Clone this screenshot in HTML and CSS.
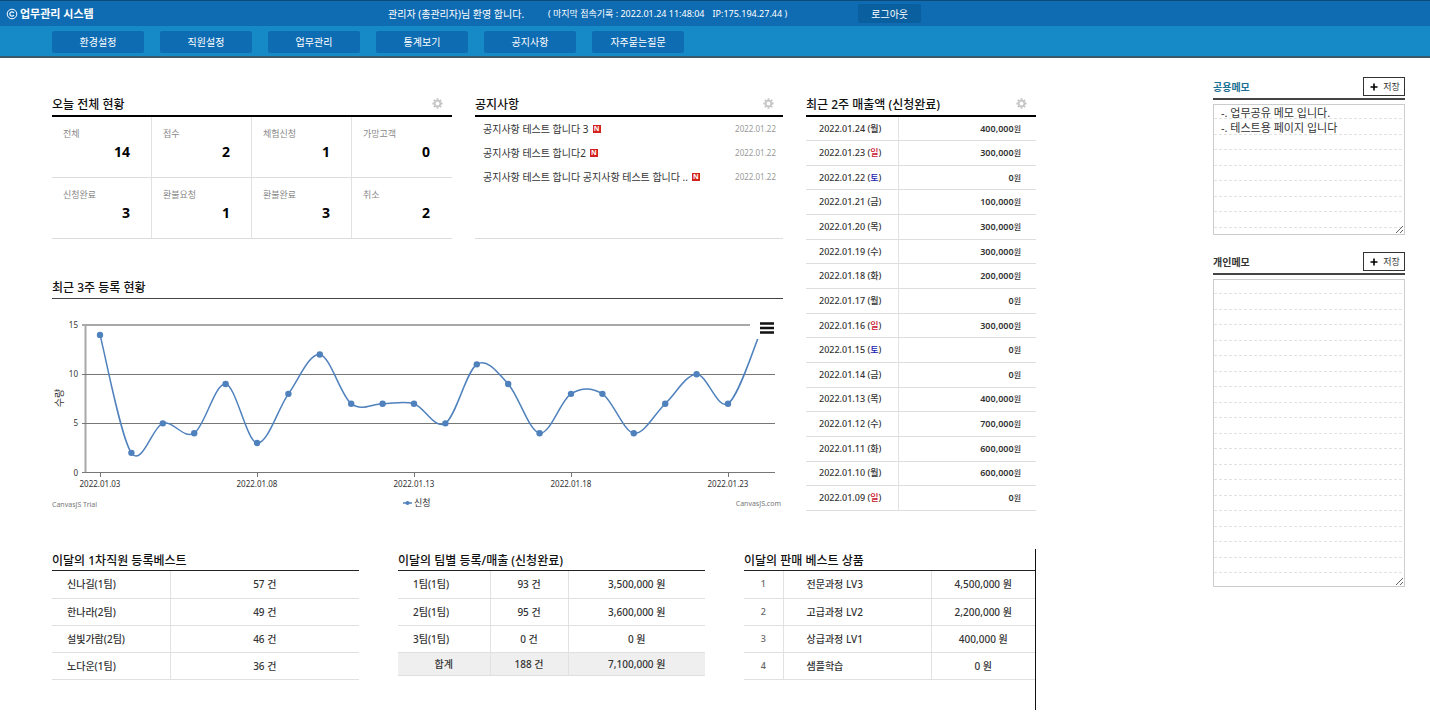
FILE: index.html
```html
<!DOCTYPE html>
<html lang="ko">
<head>
<meta charset="utf-8">
<title>업무관리 시스템</title>
<link rel="stylesheet" href="styles.css">
</head>
<body>
<svg class="defs" aria-hidden="true">
  <symbol id="gear" viewBox="0 0 12 12">
    <circle cx="6" cy="6" r="3.1" fill="none" stroke="currentColor" stroke-width="1.9"/>
    <path d="M6 .4v2M6 9.6v2M.4 6h2M9.6 6h2M2 2l1.5 1.5M8.500 8.500L10 10M10 2L8.500 3.500M3.500 8.500L2 10" stroke="currentColor" stroke-width="2"/>
  </symbol>
  <symbol id="plus" viewBox="0 0 8 8">
    <path d="M4 .5v7M.5 4h7" stroke="currentColor" stroke-width="1.6"/>
  </symbol>
</svg>

<header>
  <div class="topbar">
    <h1 class="brand">
      <svg class="brand-icon" viewBox="0 0 12 12" aria-hidden="true"><circle cx="6" cy="6" r="4.800" fill="none" stroke="currentColor" stroke-width="1"/><path d="M7.900 4.800A2.200 2.200 0 1 0 7.900 7.200" fill="none" stroke="currentColor" stroke-width="1.200"/></svg>
      업무관리 시스템
    </h1>
    <span class="welcome">관리자 (총관리자)님 환영 합니다.</span>
    <span class="log">( 마지막 접속기록 : 2022.01.24 11:48:04</span>
    <span class="log-ip">IP:175.194.27.44 )</span>
    <button class="logout" type="button">로그아웃</button>
  </div>
  <nav class="menu">
    <a href="#">환경설정</a>
    <a href="#">직원설정</a>
    <a href="#">업무관리</a>
    <a href="#">통계보기</a>
    <a href="#">공지사항</a>
    <a href="#">자주묻는질문</a>
  </nav>
</header>

<div class="page">
  <main class="main">
    <div class="overview">
      <section class="today">
        <div class="head"><h2>오늘 전체 현황</h2><button class="gear" type="button" aria-label="설정"><svg><use href="#gear"/></svg></button></div>
        <dl class="stats">
          <div><dt>전체</dt><dd>14</dd></div>
          <div><dt>접수</dt><dd>2</dd></div>
          <div><dt>체험신청</dt><dd>1</dd></div>
          <div><dt>가망고객</dt><dd>0</dd></div>
          <div><dt>신청완료</dt><dd>3</dd></div>
          <div><dt>환불요청</dt><dd>1</dd></div>
          <div><dt>환불완료</dt><dd>3</dd></div>
          <div><dt>취소</dt><dd>2</dd></div>
        </dl>
      </section>

      <section class="notice">
        <div class="head"><h2>공지사항</h2><button class="gear" type="button" aria-label="설정"><svg><use href="#gear"/></svg></button></div>
        <ul class="notices">
          <li><a href="#">공지사항 테스트 합니다 3</a><span class="new">N</span><time>2022.01.22</time></li>
          <li><a href="#">공지사항 테스트 합니다2</a><span class="new">N</span><time>2022.01.22</time></li>
          <li><a href="#">공지사항 테스트 합니다 공지사항 테스트 합니다 ..</a><span class="new">N</span><time>2022.01.22</time></li>
        </ul>
      </section>

      <section class="sales">
        <div class="head"><h2>최근 2주 매출액 (신청완료)</h2><button class="gear" type="button" aria-label="설정"><svg><use href="#gear"/></svg></button></div>
        <table class="daily">
          <tbody>
            <tr><td>2022.01.24 (<b>월</b>)</td><td>400,000<small>원</small></td></tr>
            <tr><td>2022.01.23 (<b class="sun">일</b>)</td><td>300,000<small>원</small></td></tr>
            <tr><td>2022.01.22 (<b class="sat">토</b>)</td><td>0<small>원</small></td></tr>
            <tr><td>2022.01.21 (<b>금</b>)</td><td>100,000<small>원</small></td></tr>
            <tr><td>2022.01.20 (<b>목</b>)</td><td>300,000<small>원</small></td></tr>
            <tr><td>2022.01.19 (<b>수</b>)</td><td>300,000<small>원</small></td></tr>
            <tr><td>2022.01.18 (<b>화</b>)</td><td>200,000<small>원</small></td></tr>
            <tr><td>2022.01.17 (<b>월</b>)</td><td>0<small>원</small></td></tr>
            <tr><td>2022.01.16 (<b class="sun">일</b>)</td><td>300,000<small>원</small></td></tr>
            <tr><td>2022.01.15 (<b class="sat">토</b>)</td><td>0<small>원</small></td></tr>
            <tr><td>2022.01.14 (<b>금</b>)</td><td>0<small>원</small></td></tr>
            <tr><td>2022.01.13 (<b>목</b>)</td><td>400,000<small>원</small></td></tr>
            <tr><td>2022.01.12 (<b>수</b>)</td><td>700,000<small>원</small></td></tr>
            <tr><td>2022.01.11 (<b>화</b>)</td><td>600,000<small>원</small></td></tr>
            <tr><td>2022.01.10 (<b>월</b>)</td><td>600,000<small>원</small></td></tr>
            <tr><td>2022.01.09 (<b class="sun">일</b>)</td><td>0<small>원</small></td></tr>
          </tbody>
        </table>
      </section>

      <section class="trend">
        <div class="head thin"><h2>최근 3주 등록 현황</h2></div>
        <div class="chart">
          <svg class="plot" viewBox="0 0 731 204" role="img" aria-label="최근 3주 등록 현황">
            <g class="grid">
              <path class="axis" d="M30 18H731M33.500 18V166"/>
              <path d="M30 67.500H723M30 116.500H723M30 165.500H723"/>
              <path d="M48.500 166v4M205.500 166v4M362.500 166v4M519.500 166v4M676.500 166v4"/>
            </g>
            <g class="ylabels">
              <text x="26" y="21">15</text>
              <text x="26" y="70">10</text>
              <text x="26" y="119">5</text>
              <text x="26" y="169">0</text>
            </g>
            <g class="xlabels">
              <text x="48" y="180">2022.01.03</text>
              <text x="205" y="180">2022.01.08</text>
              <text x="362" y="180">2022.01.13</text>
              <text x="519" y="180">2022.01.18</text>
              <text x="676" y="180">2022.01.23</text>
            </g>
            <text class="ytitle" transform="translate(11 91) rotate(-90)">수량</text>
            <g id="series"></g>
            <g class="legend">
              <path d="M351 196h9"/>
              <circle cx="355.500" cy="196" r="2"/>
              <text x="362" y="199">신청</text>
            </g>
            <text class="credit" x="0" y="200">CanvasJS Trial</text>
            <a href="#"><text class="credit end" x="729" y="199">CanvasJS.com</text></a>
          </svg>
          <button class="export" type="button" aria-label="차트 메뉴"><svg viewBox="0 0 14 12"><path d="M0 1.500h14M0 6h14M0 10.500h14" stroke="#111" stroke-width="2.400"/></svg></button>
        </div>
      </section>
    </div>

    <div class="rankings">
      <section>
        <div class="head dark"><h2>이달의 1차직원 등록베스트</h2></div>
        <table class="rank staff">
          <colgroup><col class="c-staff"><col></colgroup>
          <tbody>
            <tr><td>신나길(1팀)</td><td>57 건</td></tr>
            <tr><td>한나라(2팀)</td><td>49 건</td></tr>
            <tr><td>설빛가람(2팀)</td><td>46 건</td></tr>
            <tr><td>노다운(1팀)</td><td>36 건</td></tr>
          </tbody>
        </table>
      </section>
      <section>
        <div class="head dark"><h2>이달의 팀별 등록/매출 (신청완료)</h2></div>
        <table class="rank team">
          <colgroup><col class="c-team"><col class="c-count"><col></colgroup>
          <tbody>
            <tr><td>1팀(1팀)</td><td>93 건</td><td>3,500,000 원</td></tr>
            <tr><td>2팀(1팀)</td><td>95 건</td><td>3,600,000 원</td></tr>
            <tr><td>3팀(1팀)</td><td>0 건</td><td>0 원</td></tr>
          </tbody>
          <tfoot>
            <tr><th scope="row">합계</th><td>188 건</td><td>7,100,000 원</td></tr>
          </tfoot>
        </table>
      </section>
      <section class="products">
        <div class="head dark"><h2>이달의 판매 베스트 상품</h2></div>
        <table class="rank product">
          <colgroup><col class="c-no"><col><col class="c-price"></colgroup>
          <tbody>
            <tr><td>1</td><td>전문과정 LV3</td><td>4,500,000 원</td></tr>
            <tr><td>2</td><td>고급과정 LV2</td><td>2,200,000 원</td></tr>
            <tr><td>3</td><td>상급과정 LV1</td><td>400,000 원</td></tr>
            <tr><td>4</td><td>샘플학습</td><td>0 원</td></tr>
          </tbody>
        </table>
      </section>
    </div>
  </main>

  <aside class="memos">
    <form class="memo">
      <div class="memo-head"><label class="shared" for="memo-shared">공용메모</label><button type="button"><svg><use href="#plus"/></svg>저장</button></div>
      <textarea id="memo-shared" rows="8">-. 업무공유 메모 입니다.
-. 테스트용 페이지 입니다</textarea>
    </form>
    <form class="memo">
      <div class="memo-head"><label for="memo-own">개인메모</label><button type="button"><svg><use href="#plus"/></svg>저장</button></div>
      <textarea id="memo-own" class="tall" rows="20"></textarea>
    </form>
  </aside>
</div>
<script src="chart.js"></script>
</body>
</html>
```
FILE: styles.css
```css
* { box-sizing: border-box; }

body {
  margin: 0;
  background: #fff;
  color: #333;
  font: 10px/16px "Noto Sans", "Noto Sans CJK KR", sans-serif;
}

h1, h2, dl, dd, ul { margin: 0; padding: 0; }
ul { list-style: none; }
button, textarea { font: inherit; color: inherit; }
button { cursor: pointer; }
a { color: inherit; text-decoration: none; }
table { width: 100%; border-collapse: collapse; }
td, th { padding: 0; font-weight: 500; }
.defs { position: absolute; width: 0; height: 0; }

/* header */
.topbar {
  display: flex;
  align-items: center;
  height: 26px;
  padding-left: 6px;
  border-top: 1px solid #0b4a79;
  background: #0f6cb3;
  color: #fff;
}
.brand {
  display: flex;
  align-items: center;
  gap: 2px;
  width: 382px;
  font-size: 11px;
  font-weight: 700;
}
.brand-icon { width: 12px; height: 12px; }
.welcome { width: 160px; }
.log, .log-ip { font-size: 9px; }
.log-ip { margin-left: 8px; }
.logout {
  width: 63px;
  height: 19px;
  margin-left: 71px;
  padding: 0;
  border: 0;
  border-radius: 2px;
  background: #0a609f;
}
.menu {
  display: flex;
  gap: 16px;
  padding: 5px 0 3px 52px;
  border-bottom: 2px solid #3c586c;
  background: #168ac7;
  color: #fff;
}
.menu a {
  width: 92px;
  border-radius: 2px;
  background: #0e6cb3;
  line-height: 22px;
  text-align: center;
}

/* page frame */
.page {
  display: flex;
  justify-content: space-between;
  gap: 40px;
  padding: 0 25px 10px 52px;
}
.main {
  flex: 1;
  max-width: 984px;
  padding-top: 35px;
}
.overview {
  display: grid;
  grid-template-columns: 400fr 308fr 230fr;
  grid-template-rows: auto 1fr;
  column-gap: 23px;
}
.sales { grid-column: 3; grid-row: 1 / 3; }
.trend { grid-column: 1 / 3; margin-top: 36px; }

.head {
  display: flex;
  align-items: center;
  justify-content: space-between;
  height: 24px;
  padding-right: 9px;
  border-bottom: 2px solid #000;
}
.head h2 {
  padding-top: 2px;
  color: #111;
  font-size: 12px;
  font-weight: 500;
}
.head.thin { height: 24px; border-bottom: 1px solid #444; }
.head.dark { height: 22px; border-bottom: 1px solid #222; }
.gear {
  display: flex;
  padding: 0 0 2px;
  border: 0;
  background: none;
  color: #c6c6c6;
}
.gear svg { width: 11px; height: 11px; }

/* today */
.stats {
  display: grid;
  grid-template-columns: repeat(4, 1fr);
}
.stats div {
  height: 61px;
  padding: 9px 21px 0 11px;
  border-right: 1px solid #e2e2e2;
  border-bottom: 1px solid #dcdcdc;
}
.stats div:nth-child(4n) { padding-right: 22px; border-right: 0; }
.stats dt { color: #888; font-size: 9px; }
.stats dd {
  color: #000;
  font-size: 14px;
  font-weight: 700;
  line-height: 20px;
  text-align: right;
}

/* notices */
.notice { display: flex; flex-direction: column; }
.notices { flex: 1; border-bottom: 1px solid #dcdcdc; }
.notices li {
  display: flex;
  align-items: center;
  height: 24px;
  padding: 0 7px 0 8px;
}
.new {
  width: 8px;
  height: 8px;
  margin-left: 4px;
  background: #d4221c;
  color: #fff;
  font-size: 7px;
  font-weight: 700;
  line-height: 8px;
  text-align: center;
}
.notices time { margin-left: auto; color: #999; font-size: 8px; }

/* daily sales */
.daily { height: 394px; font-size: 9px; line-height: 12px; }
.daily td { border-bottom: 1px solid #dedede; }
.daily td:first-child {
  width: 40%;
  padding-left: 13px;
  border-right: 1px solid #e2e2e2;
}
.daily td:last-child { padding-right: 15px; font-weight: 600; text-align: right; }
.daily small { font-size: 8px; font-weight: 500; }
.daily b { font-weight: 500; }
.daily .sun { color: #c8102e; }
.daily .sat { color: #1a1ab0; }

/* chart */
.chart { position: relative; padding-top: 8px; }
.plot { display: block; width: 100%; }
.plot text { fill: #333; font-size: 8px; }
.grid path { fill: none; stroke: #777; stroke-width: 1; }
.grid .axis { stroke: #a8a8a8; stroke-width: 2; }
.plot .ylabels text { text-anchor: end; }
.plot .xlabels text { text-anchor: middle; }
.plot .ytitle { font-size: 10px; text-anchor: middle; }
.plot .legend text { font-size: 9px; }
.plot .credit { fill: #777; font-size: 7px; }
.plot .end { text-anchor: end; }
.line, .legend path { fill: none; stroke: #4f81bc; stroke-width: 1.5; }
.dot, .legend circle { fill: #4f81bc; }
.export {
  position: absolute;
  top: 14px;
  right: 0;
  display: flex;
  align-items: center;
  justify-content: center;
  width: 33px;
  height: 26px;
  padding: 4px 0 0;
  border: 0;
  background: #fff;
}
.export svg { width: 14px; height: 12px; }

/* monthly rankings */
.rankings {
  display: grid;
  grid-template-columns: 307fr 307fr 292fr;
  column-gap: 39px;
  margin-top: 38px;
}
.rank { table-layout: fixed; }
.rank td, .rank th {
  height: 27px;
  border-bottom: 1px solid #e0e0e0;
  text-align: center;
}
.rank td + td, .rank th + td { border-left: 1px solid #e2e2e2; }
.staff td:first-child, .team td:first-child { padding-left: 15px; text-align: left; }
.team tfoot td, .team tfoot th { height: 23px; background: #efefef; }
.product td:first-child { color: #666; font-size: 9px; }
.product td:nth-child(2) { padding-left: 23px; text-align: left; }
.c-staff { width: 118px; }
.c-team { width: 92px; }
.c-count { width: 78px; }
.c-no { width: 39px; }
.c-price { width: 104px; }
.products { padding-bottom: 30px; border-right: 1px solid #111; }

/* memos */
.memos { width: 192px; padding-top: 19px; }
.memo { margin-bottom: 17px; }
.memo-head {
  display: flex;
  align-items: flex-start;
  justify-content: space-between;
  height: 23px;
  margin-bottom: 4px;
  border-bottom: 2px solid #444;
}
.memo-head label { font-weight: 600; line-height: 20px; }
.memo-head .shared { color: #1c7195; }
.memo-head button {
  display: flex;
  align-items: center;
  justify-content: center;
  gap: 5px;
  width: 42px;
  height: 19px;
  padding: 0 0 0 2px;
  border: 1px solid #333;
  background: #fff;
  font-size: 9px;
}
.memo-head svg { width: 8px; height: 8px; color: #000; }
.memo textarea {
  display: block;
  width: 100%;
  height: 131px;
  padding: 0 7px;
  border: 1px solid #ccc;
  background:
    repeating-linear-gradient(90deg, transparent 0 3px, #fff 3px 5px),
    repeating-linear-gradient(transparent 0 13px, #e2e2e2 13px 14px, transparent 14px 29px, #e2e2e2 29px 30px, transparent 30px 31px);
  font-size: 11px;
  line-height: 15px;
}
.memo textarea.tall { height: 308px; }
```
FILE: chart.js
```js
const values = [14, 2, 5, 4, 9, 3, 8, 12, 7, 7, 7, 5, 11, 9, 4, 8, 8, 4, 7, 10, 7, 14];
const points = values.map((v, i) => ({ x: 48 + i * 31.4, y: 165.5 - v * 9.83 }));
const at = (i) => points[Math.max(0, Math.min(points.length - 1, i))];

let d = `M${points[0].x} ${points[0].y}`;
for (let i = 0; i < points.length - 1; i++) {
  const a = at(i), b = at(i + 1), before = at(i - 1), after = at(i + 2);
  d += `C${a.x + (b.x - before.x) / 6} ${a.y + (b.y - before.y) / 6} `
    + `${b.x - (after.x - a.x) / 6} ${b.y - (after.y - a.y) / 6} ${b.x} ${b.y}`;
}

const dots = points.map((p) => `<circle class="dot" cx="${p.x}" cy="${p.y}" r="3.2"/>`).join("");
document.getElementById("series").innerHTML = `<path class="line" d="${d}"/>${dots}`;
```
